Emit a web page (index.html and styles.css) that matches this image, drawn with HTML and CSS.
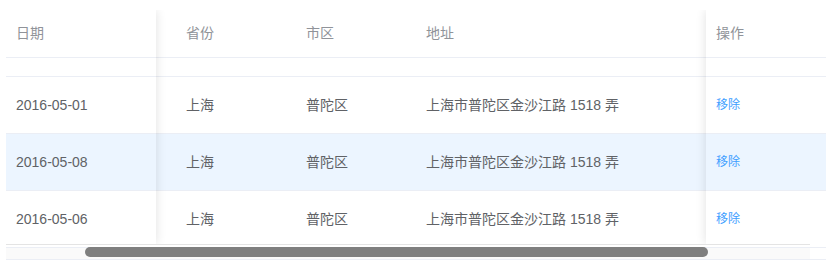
FILE: index.html
```html
<!DOCTYPE html>
<html lang="zh-CN">
<head>
<meta charset="utf-8">
<title>Table</title>
<link rel="stylesheet" href="styles.css">
</head>
<body>
<div class="table">
  <div class="table-body">
    <div class="col col-fixed-left">
      <div class="cell head">日期</div>
      <div class="cell gap"></div>
      <div class="cell">2016-05-01</div>
      <div class="cell current">2016-05-08</div>
      <div class="cell">2016-05-06</div>
    </div>
    <div class="col col-spacer">
      <div class="cell head"></div>
      <div class="cell gap"></div>
      <div class="cell"></div>
      <div class="cell current"></div>
      <div class="cell"></div>
    </div>
    <div class="col col-w120">
      <div class="cell head">省份</div>
      <div class="cell gap"></div>
      <div class="cell">上海</div>
      <div class="cell current">上海</div>
      <div class="cell">上海</div>
    </div>
    <div class="col col-w120">
      <div class="cell head">市区</div>
      <div class="cell gap"></div>
      <div class="cell">普陀区</div>
      <div class="cell current">普陀区</div>
      <div class="cell">普陀区</div>
    </div>
    <div class="col col-fill">
      <div class="cell head">地址</div>
      <div class="cell gap"></div>
      <div class="cell">上海市普陀区金沙江路 1518 弄</div>
      <div class="cell current">上海市普陀区金沙江路 1518 弄</div>
      <div class="cell">上海市普陀区金沙江路 1518 弄</div>
    </div>
    <div class="col col-fixed-right">
      <div class="cell head">操作</div>
      <div class="cell gap"></div>
      <div class="cell"><span class="link">移除</span></div>
      <div class="cell current"><span class="link">移除</span></div>
      <div class="cell"><span class="link">移除</span></div>
    </div>
  </div>
  <div class="hscroll">
    <div class="track-top"></div>
    <div class="band">
      <div class="band-fill"></div>
      <div class="band-gutter"></div>
    </div>
    <div class="thumb"></div>
  </div>
</div>
</body>
</html>
```
FILE: styles.css
```css
* { box-sizing: border-box; }
html, body { margin: 0; background: #fff; }
body {
  font-family: "Liberation Sans", "Noto Sans CJK SC", sans-serif;
  font-size: 14px;
  color: #606266;
}
.table {
  width: 820px;
  margin: 10px 0 0 6px;
  overflow: hidden;
}
.table-body {
  display: flex;
  height: 234px;
  overflow: hidden;
}
.col {
  display: flex;
  flex-direction: column;
  background: #fff;
  flex: none;
}
.col-fixed-left {
  width: 150px;
  position: relative;
  z-index: 2;
  box-shadow: 0 0 10px rgba(0, 0, 0, 0.12);
}
.col-fixed-right {
  width: 120px;
  position: relative;
  z-index: 2;
  box-shadow: 0 0 10px rgba(0, 0, 0, 0.12);
}
.col-spacer { width: 20px; }
.col-w120 { width: 120px; }
.col-fill { flex: 1 1 auto; }
.cell {
  height: 57px;
  flex: none;
  display: flex;
  align-items: center;
  padding: 0 10px;
  border-bottom: 1px solid #ebeef5;
  white-space: nowrap;
  line-height: 23px;
}
.cell.head {
  height: 48px;
  color: #909399;
  font-weight: 400;
}
.cell.gap { height: 19px; }
.cell.current { background: #ecf5ff; }
.link {
  color: #409eff;
  font-size: 12px;
}
.hscroll {
  position: relative;
  height: 16px;
}
.track-top {
  width: 804px;
  height: 1px;
  background: #e4e4e4;
  margin-bottom: 2px;
}
.band {
  display: flex;
  height: 13px;
  border-top: 1px solid #ebeef5;
  border-bottom: 1px solid #ebeef5;
}
.band-fill { flex: 1 1 auto; background: #fafafa; }
.band-gutter { width: 16px; background: #fff; }
.thumb {
  position: absolute;
  left: 79px;
  top: 3px;
  width: 623px;
  height: 10px;
  border-radius: 5px;
  background: #7f7f7f;
}
```
